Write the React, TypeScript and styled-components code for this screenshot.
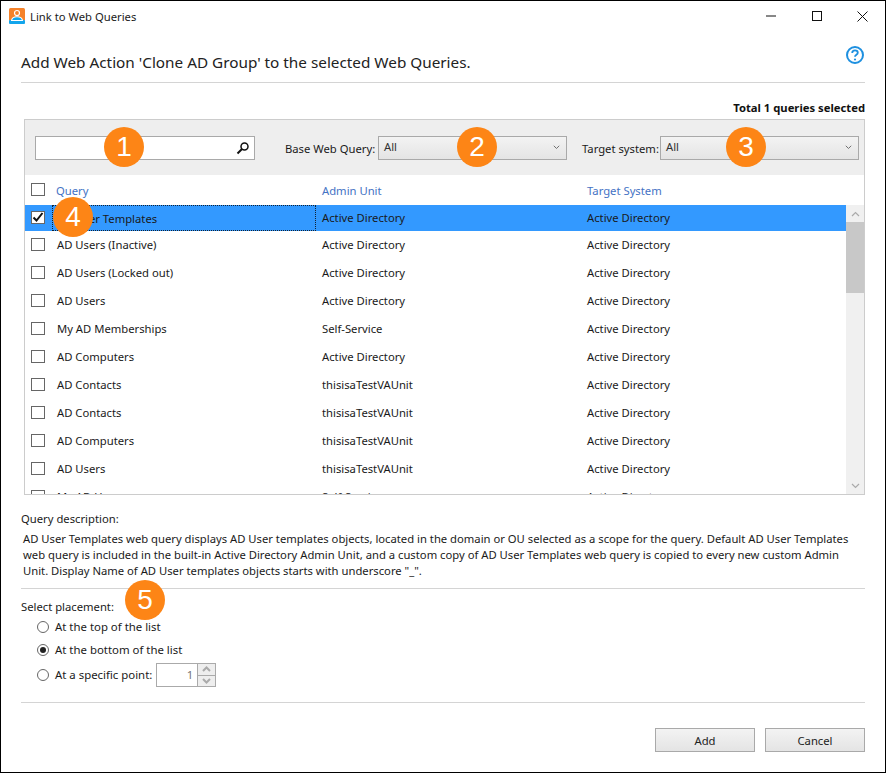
import { createGlobalStyle, styled } from 'styled-components';

const GlobalStyle = createGlobalStyle`
  html, body {
    margin: 0;
    padding: 0;
    background: #fff;
  }
  * {
    box-sizing: border-box;
  }
`;

const Window = styled.div`
  position: relative;
  width: 886px;
  height: 773px;
  background: #fff;
  border: 1px solid #000;
  font-family: 'Noto Sans', 'Open Sans', sans-serif;
  font-size: 11.25px;
  color: #1a1a1a;
  overflow: hidden;
`;

const TitleBar = styled.div`
  height: 30px;
  display: flex;
  align-items: center;
  padding-left: 8px;
`;

const TitleText = styled.span`
  flex: 1;
  margin-left: 5px;
`;

const WindowButton = styled.div`
  width: 45.5px;
  height: 30px;
  display: flex;
  align-items: center;
  justify-content: center;
`;

const Content = styled.div`
  padding: 0 20px;
`;

const HeadingRow = styled.div`
  height: 52px;
  display: flex;
  align-items: center;
  justify-content: space-between;
  border-bottom: 1px solid #d4d4d4;
  padding-top: 10px;
`;

const Heading = styled.div`
  font-size: 15.3px;
  color: #222;
`;

const HelpIcon = styled.svg`
  margin: -14px 0 0 0;
`;

const TotalRow = styled.div`
  height: 36px;
  padding-top: 16px;
  text-align: right;
  font-weight: 700;
  line-height: 17px;
  color: #111;
`;

const Panel = styled.div`
  margin-left: 3px;
  height: 376px;
  border: 1px solid #ccc;
  overflow: hidden;
`;

const Toolbar = styled.div`
  height: 55px;
  background: #eee;
  display: flex;
  align-items: center;
  padding: 1px 5px 0 10px;
`;

const SearchBox = styled.div`
  flex: none;
  width: 220px;
  height: 24px;
  border: 1px solid #a9a9a9;
  background: #fff;
  display: flex;
  align-items: center;
  justify-content: flex-end;
  padding-right: 4px;
  margin-right: 30px;
`;

const FilterLabel = styled.span<{ $width: number }>`
  flex: none;
  width: ${(p) => p.$width}px;
  white-space: nowrap;
  padding-top: 1px;
`;

const Select = styled.div<{ $width: number; $gap: number }>`
  flex: none;
  width: ${(p) => p.$width}px;
  margin-right: ${(p) => p.$gap}px;
  height: 24px;
  border: 1px solid #a9a9a9;
  background: linear-gradient(#f3f3f3, #e4e4e4);
  display: flex;
  align-items: center;
  justify-content: space-between;
  padding: 0 6px 2px 5px;
  line-height: 18px;
  color: #333;
`;

const ColumnGrid = styled.div`
  display: grid;
  grid-template-columns: 21px 265px 265px 1fr;
  align-items: center;
`;

const HeaderRow = styled(ColumnGrid)`
  height: 30px;
  padding-left: 6px;
  color: #4472c4;
`;

const ListArea = styled.div`
  display: flex;
  height: 289px;
`;

const Rows = styled.div`
  flex: 1;
`;

const Row = styled(ColumnGrid)<{ $selected?: boolean }>`
  height: ${(p) => (p.$selected ? 27 : 28)}px;
  padding-left: 6px;
  padding-bottom: ${(p) => (p.$selected ? 0 : 2)}px;
  border-bottom: ${(p) => (p.$selected ? '1px solid #fff' : 'none')};
  background: ${(p) => (p.$selected ? '#3399ff' : 'transparent')};
  background-clip: padding-box;
  color: #1a1a1a;
`;

const CheckCell = styled.div`
  display: flex;
  align-items: center;
  margin-top: -2px;
`;

const CheckBox = styled.div`
  width: 14px;
  height: 13px;
  border: 1px solid #666;
  background: #fff;
  display: flex;
  align-items: center;
  justify-content: center;
`;

const NameCell = styled.div<{ $focus?: boolean }>`
  height: 26px;
  line-height: 25px;
  padding-left: ${(p) => (p.$focus ? '4px' : '5px')};
  margin-right: 1px;
  border: ${(p) => (p.$focus ? '1px dotted #123' : 'none')};
`;

const Cell = styled.div`
  padding-left: 5px;
  line-height: 26px;
`;

const HeaderCell = styled.div<{ $inset: number }>`
  padding-left: ${(p) => p.$inset}px;
`;

const ScrollBar = styled.div`
  flex: none;
  width: 18px;
  height: 289px;
  background: #f0f0f0;
  display: flex;
  flex-direction: column;
  align-items: center;
`;

const ScrollArrow = styled.div`
  height: 17px;
  width: 100%;
  display: flex;
  align-items: center;
  justify-content: center;
`;

const ScrollThumb = styled.div`
  height: 71px;
  width: 100%;
  background: #c8c8c8;
`;

const ScrollSpacer = styled.div`
  flex: 1;
`;

const SectionLabel = styled.div`
  height: 17px;
  line-height: 17px;
`;

const DescriptionBlock = styled.div`
  padding-top: 15px;
  height: 94px;
  border-bottom: 1px solid #d4d4d4;
`;

const DescriptionText = styled.div`
  margin-top: 4px;
  padding-left: 2px;
  line-height: 16px;
  white-space: nowrap;
`;

const PlacementBlock = styled.div`
  padding-top: 9px;
  height: 114px;
  border-bottom: 1px solid #d4d4d4;
`;

const RadioRow = styled.div<{ $height: number }>`
  height: ${(p) => p.$height}px;
  display: flex;
  align-items: center;
  gap: 6px;
  padding-left: 16px;
  font-size: 11.4px;
`;

const Radio = styled.div<{ $checked?: boolean }>`
  width: 12px;
  height: 12px;
  border-radius: 50%;
  border: 1px solid #666;
  display: flex;
  align-items: center;
  justify-content: center;
  &::after {
    content: '';
    display: ${(p) => (p.$checked ? 'block' : 'none')};
    width: 6px;
    height: 6px;
    border-radius: 50%;
    background: #222;
  }
`;

const Spinner = styled.div`
  width: 60px;
  height: 24px;
  margin: 1px 0 0 -2px;
  border: 1px solid #aaa;
  display: flex;
`;

const SpinnerValue = styled.div`
  flex: 1;
  text-align: right;
  padding-right: 4px;
  line-height: 22px;
  color: #777;
`;

const SpinnerButtons = styled.div`
  width: 18px;
  display: flex;
  flex-direction: column;
  border-left: 1px solid #aaa;
`;

const SpinnerButton = styled.div`
  flex: 1;
  background: #eee;
  display: flex;
  align-items: center;
  justify-content: center;
  & + & {
    border-top: 1px solid #aaa;
  }
`;

const Footer = styled.div`
  display: flex;
  justify-content: flex-end;
  gap: 10px;
  padding-top: 25px;
`;

const DialogButton = styled.div`
  width: 100px;
  height: 24px;
  border: 1px solid #a9a9a9;
  background: linear-gradient(#f3f3f3, #e4e4e4);
  display: flex;
  align-items: center;
  justify-content: center;
  color: #222;
`;

const Badge = styled.div<{ $x: number; $y: number }>`
  position: absolute;
  left: ${(p) => p.$x - 21}px;
  top: ${(p) => p.$y - 21}px;
  width: 40px;
  height: 40px;
  border-radius: 50%;
  background: #fd8516;
  color: #fff;
  font-family: 'Liberation Sans', Arial, sans-serif;
  font-size: 28px;
  display: flex;
  align-items: center;
  justify-content: center;
`;

const LinkIcon = () => (
  <svg width="16" height="16" viewBox="0 0 16 16">
    <rect x="0" y="0" width="16" height="13" rx="1.5" fill="#f5822a" />
    <rect x="0" y="12" width="16" height="4" rx="1" fill="#12a5ec" />
    <path d="M2.500 12.500c.5-2.600 2.800-3.700 5.500-3.700s5 1.100 5.500 3.700z" fill="#12a5ec" stroke="#fff" strokeWidth="1.100" />
    <circle cx="8" cy="5" r="2.500" fill="#f5822a" stroke="#fff" strokeWidth="1.200" />
  </svg>
);

const Chevron = ({ up, color = '#666', size = 9, weight = 1.2 }: { up?: boolean; color?: string; size?: number; weight?: number }) => (
  <svg width={size} height={(size * 2) / 3} viewBox="0 0 9 6">
    <path d={up ? 'M1 5l3.500-3.500L8 5' : 'M1 1l3.500 3.500L8 1'} fill="none" stroke={color} strokeWidth={weight} />
  </svg>
);

const Tick = () => (
  <svg width="12" height="12" viewBox="0 0 12 12">
    <path d="M1.500 6.500l3 3 6-7.500" fill="none" stroke="#111" strokeWidth="2" />
  </svg>
);

const queries = [
  ['AD Users (Inactive)', 'Active Directory'],
  ['AD Users (Locked out)', 'Active Directory'],
  ['AD Users', 'Active Directory'],
  ['My AD Memberships', 'Self-Service'],
  ['AD Computers', 'Active Directory'],
  ['AD Contacts', 'thisisaTestVAUnit'],
  ['AD Contacts', 'thisisaTestVAUnit'],
  ['AD Computers', 'thisisaTestVAUnit'],
  ['AD Users', 'thisisaTestVAUnit'],
  ['My AD Users', 'Self-Service'],
];

const App = () => {
  return (
    <>
      <GlobalStyle />
      <Window>
        <TitleBar>
          <LinkIcon />
          <TitleText>Link to Web Queries</TitleText>
          <WindowButton>
            <svg width="10" height="10" viewBox="0 0 10 10">
              <path d="M0 5h10" stroke="#111" strokeWidth="1" />
            </svg>
          </WindowButton>
          <WindowButton>
            <svg width="10" height="10" viewBox="0 0 10 10">
              <rect x=".5" y=".5" width="9" height="9" fill="none" stroke="#111" />
            </svg>
          </WindowButton>
          <WindowButton>
            <svg width="11" height="11" viewBox="0 0 11 11">
              <path d="M.5.5l10 10M10.500.5l-10 10" stroke="#111" strokeWidth="1" />
            </svg>
          </WindowButton>
        </TitleBar>
        <Content>
          <HeadingRow>
            <Heading>Add Web Action 'Clone AD Group' to the selected Web Queries.</Heading>
            <HelpIcon width="20" height="20" viewBox="0 0 20 20">
              <circle cx="10" cy="10" r="8" fill="none" stroke="#1e90e0" strokeWidth="2" />
              <path
                d="M7.200 8c0-1.700 1.200-2.600 2.800-2.600s2.800 .9 2.800 2.400c0 2-2.800 2-2.800 4"
                fill="none"
                stroke="#1e90e0"
                strokeWidth="1.800"
              />
              <circle cx="10" cy="14.500" r="1.100" fill="#1e90e0" />
            </HelpIcon>
          </HeadingRow>
          <TotalRow>Total 1 queries selected</TotalRow>
          <Panel>
            <Toolbar>
              <SearchBox>
                <svg width="14" height="14" viewBox="0 0 14 14">
                  <circle cx="8.500" cy="5.500" r="3.500" fill="none" stroke="#111" strokeWidth="1.500" />
                  <path d="M6 8l-4.500 4.500" stroke="#111" strokeWidth="2" />
                </svg>
              </SearchBox>
              <FilterLabel $width={93}>Base Web Query:</FilterLabel>
              <Select $width={189} $gap={15}>
                All
                <Chevron size={7} />
              </Select>
              <FilterLabel $width={78}>Target system:</FilterLabel>
              <Select $width={199} $gap={0}>
                All
                <Chevron size={7} />
              </Select>
            </Toolbar>
            <HeaderRow>
              <CheckCell>
                <CheckBox />
              </CheckCell>
              <HeaderCell $inset={4}>Query</HeaderCell>
              <HeaderCell $inset={5}>Admin Unit</HeaderCell>
              <HeaderCell $inset={5}>Target System</HeaderCell>
            </HeaderRow>
            <ListArea>
              <Rows>
                <Row $selected>
                  <CheckCell>
                    <CheckBox>
                      <Tick />
                    </CheckBox>
                  </CheckCell>
                  <NameCell $focus>AD User Templates</NameCell>
                  <Cell>Active Directory</Cell>
                  <Cell>Active Directory</Cell>
                </Row>
                {queries.map(([name, unit], i) => (
                  <Row key={i}>
                    <CheckCell>
                      <CheckBox />
                    </CheckCell>
                    <NameCell>{name}</NameCell>
                    <Cell>{unit}</Cell>
                    <Cell>Active Directory</Cell>
                  </Row>
                ))}
              </Rows>
              <ScrollBar>
                <ScrollArrow>
                  <Chevron up color="#aaa" />
                </ScrollArrow>
                <ScrollThumb />
                <ScrollSpacer />
                <ScrollArrow>
                  <Chevron color="#aaa" />
                </ScrollArrow>
              </ScrollBar>
            </ListArea>
          </Panel>
          <DescriptionBlock>
            <SectionLabel>Query description:</SectionLabel>
            <DescriptionText>
              AD User Templates web query displays AD User templates objects, located in the domain or OU selected as a scope for the query. Default AD User Templates
              <br />
              web query is included in the built-in Active Directory Admin Unit, and a custom copy of AD User Templates web query is copied to every new custom Admin
              <br />
              Unit. Display Name of AD User templates objects starts with underscore "_".
            </DescriptionText>
          </DescriptionBlock>
          <PlacementBlock>
            <SectionLabel>Select placement:</SectionLabel>
            <RadioRow $height={23}>
              <Radio />
              At the top of the list
            </RadioRow>
            <RadioRow $height={23}>
              <Radio $checked />
              At the bottom of the list
            </RadioRow>
            <RadioRow $height={27}>
              <Radio />
              At a specific point:
              <Spinner>
                <SpinnerValue>1</SpinnerValue>
                <SpinnerButtons>
                  <SpinnerButton>
                    <Chevron up color="#aaa" weight={2} />
                  </SpinnerButton>
                  <SpinnerButton>
                    <Chevron color="#aaa" weight={2} />
                  </SpinnerButton>
                </SpinnerButtons>
              </Spinner>
            </RadioRow>
          </PlacementBlock>
          <Footer>
            <DialogButton>Add</DialogButton>
            <DialogButton>Cancel</DialogButton>
          </Footer>
        </Content>
        <Badge $x={124} $y={147}>1</Badge>
        <Badge $x={477} $y={147}>2</Badge>
        <Badge $x={746} $y={147}>3</Badge>
        <Badge $x={73} $y={217}>4</Badge>
        <Badge $x={145} $y={600}>5</Badge>
      </Window>
    </>
  );
};

export default App;
